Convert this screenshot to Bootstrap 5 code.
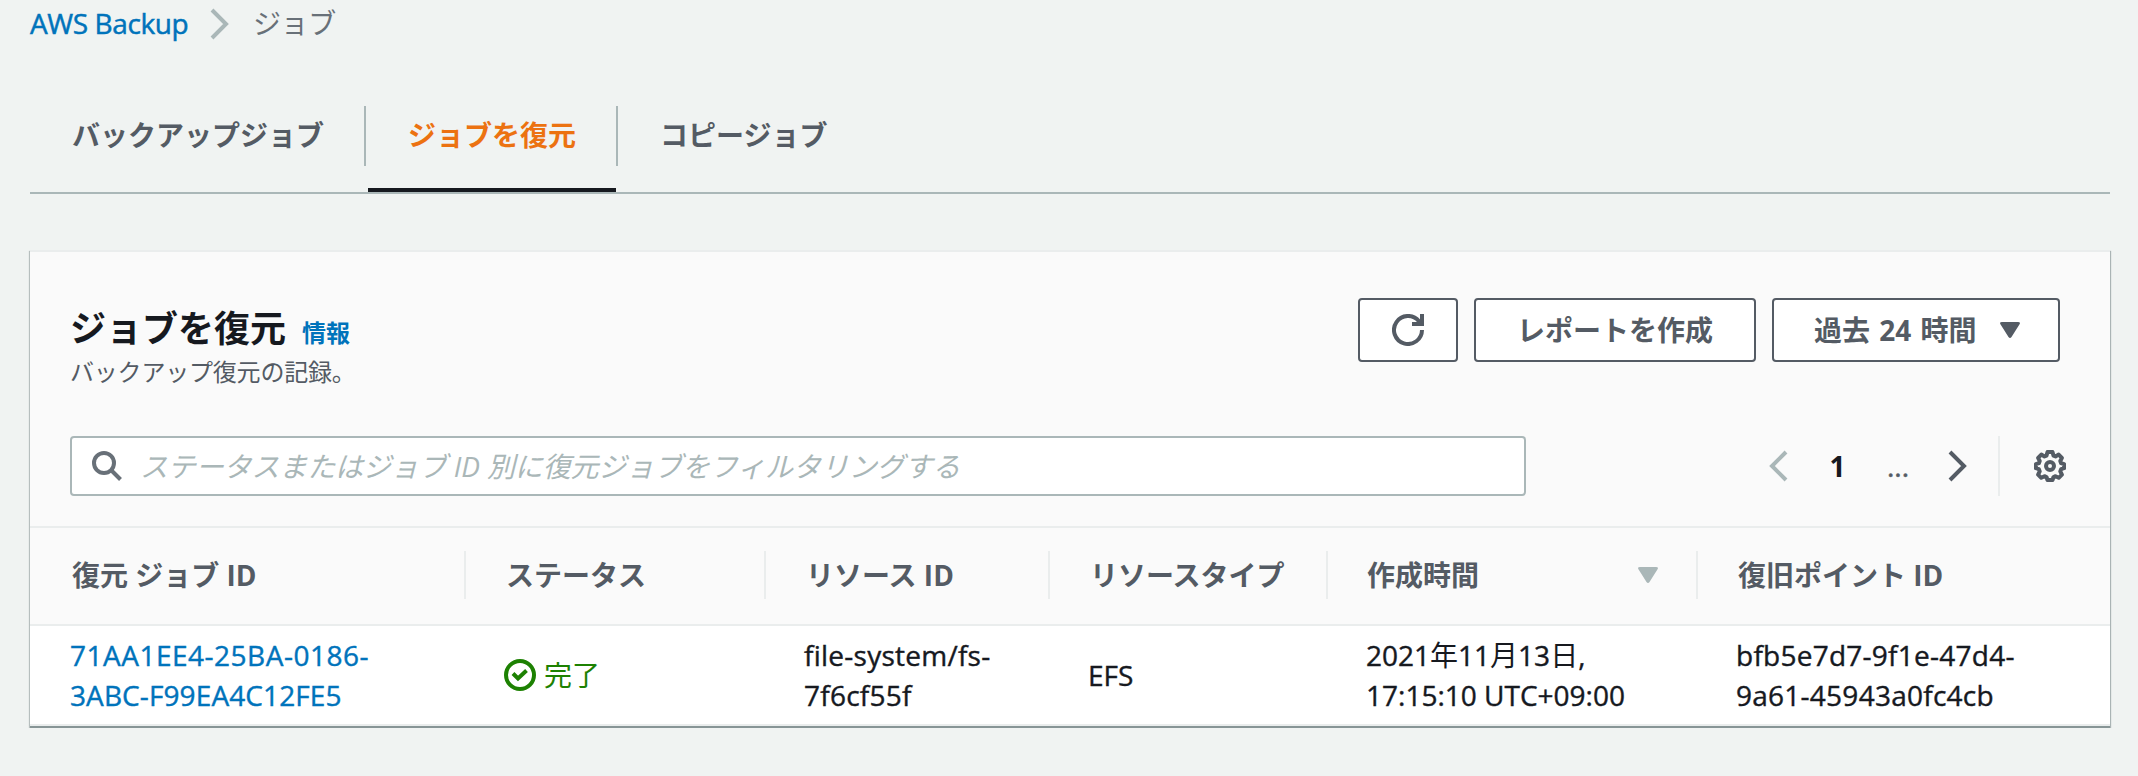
<!DOCTYPE html>
<html lang="ja">
<head>
<meta charset="utf-8">
<title>AWS Backup</title>
<link rel="stylesheet" href="https://cdn.jsdelivr.net/npm/bootstrap@5.3.0/dist/css/bootstrap.min.css">
<style>
body{background:#f0f3f2;color:#16191f;font-family:"Open Sans","Noto Sans CJK JP",sans-serif;font-size:28px;line-height:40px;overflow:hidden}
a{color:#0073bb;text-decoration:none}
svg{display:block;flex:none}
.page{padding:0 28px 0 30px}
.crumbs{height:48px;padding-top:3px}
.crumbs a{letter-spacing:-.4px;-webkit-text-stroke:.5px}
.crumbs .here{color:#687078;letter-spacing:-.4px}
.job-tabs{height:146px;padding-top:58px;border-bottom:2px solid #aab7b8}
.job-tabs .nav-link{height:86px;padding:9px 40px 0 42px;color:#545b64;font-weight:700;border-radius:0}
.job-tabs .nav-link.active{color:#ec7211;border-bottom:4px solid #16191f}
.job-tabs .divider{width:2px;height:60px;background:#aab7b8}
.panel{margin-top:56px;border:0;border-top:2px solid #eaeded;border-bottom:2px solid #879596;border-radius:0;background:#fafafa;box-shadow:0 1px 1px 0 rgba(0,28,36,.3),1px 1px 1px 0 rgba(0,28,36,.25),-1px 1px 1px 0 rgba(0,28,36,.2);color:inherit}
.panel-top{height:184px;padding:46px 50px 0 40px}
.title{font-size:36px;line-height:46px;font-weight:700}
.info{font-size:24px;font-weight:700}
.desc{font-size:24px;line-height:36px;color:#545b64;letter-spacing:-.2px;padding-top:1px}
.act{height:64px;border:2px solid #545b64;border-radius:4px;background:#fff;color:#545b64;font-size:28px;font-weight:700;line-height:40px;padding:0}
.search{width:1456px;height:60px;border:2px solid #aab7b8;border-radius:4px;background:#fff;padding-left:20px}
.search input{border:0;outline:0;background:none;padding:0 0 0 18px;height:56px;font-size:28px;letter-spacing:-.13px}
.search input::placeholder{color:#aab7b8;font-style:italic;opacity:1}
.pager{margin-left:242px;color:#545b64}
.jobs{table-layout:fixed;border-collapse:separate;border-spacing:0;width:100%;border-top:2px solid #eaeded;color:#16191f}
.jobs th{height:98px;border-bottom:2px solid #eaeded;color:#545b64;padding:0 0 2px;font-weight:700}
.jobs th>div{height:48px;border-right:2px solid #eaeded;padding-left:40px}
.jobs th:last-child>div{border:0}
.jobs th:first-child>div{padding-left:42px}
.jobs td{height:100px;border-bottom:2px solid #eaeded;background:#fff;padding:0 0 0 38px;vertical-align:middle;-webkit-text-stroke:.4px}
.jobs td:first-child{padding-left:40px}
.jobs .kanji{-webkit-text-stroke:0}
.wide{letter-spacing:.5px}
.loose{letter-spacing:.25px}
.ok{color:#1d8102}
</style>
</head>
<body>
<div class="page">
  <nav class="crumbs d-flex align-items-start">
    <a href="#" style="width:180px">AWS Backup</a>
    <svg width="20" height="32" style="margin:5px 23px 0 0" viewBox="0 0 20 32" fill="none" stroke="#aab7b8" stroke-width="4"><path d="M2 2l14 14L2 30"/></svg>
    <span class="here">ジョブ</span>
  </nav>
  <nav class="job-tabs nav flex-nowrap align-items-start">
    <a class="nav-link" href="#" style="width:334px">バックアップジョブ</a>
    <span class="divider"></span>
    <a class="nav-link active" href="#" style="width:248px;margin-left:2px;padding-left:40px;padding-right:0">ジョブを復元</a>
    <span class="divider"></span>
    <a class="nav-link" href="#">コピージョブ</a>
  </nav>
  <section class="panel card">
    <div class="panel-top d-flex justify-content-between">
      <div style="padding-top:8px">
        <div class="d-flex align-items-baseline"><span class="title">ジョブを復元</span><a class="info ms-3" href="#">情報</a></div>
        <div class="desc">バックアップ復元の記録。</div>
      </div>
      <div class="d-flex gap-3">
        <button class="act btn d-flex align-items-center justify-content-center" style="width:100px">
          <svg width="32" height="32" viewBox="0 0 32 32" fill="none" stroke="#545b64" stroke-width="4"><path d="M30 16A14 14 0 1 1 27 7.300L28.500 10M30 0V10H20"/></svg>
        </button>
        <button class="act btn" style="width:282px">レポートを作成</button>
        <button class="act btn d-flex align-items-center" style="width:288px;padding-left:40px;word-spacing:2px">過去 24 時間
          <svg style="margin-left:23px" width="20" height="16" viewBox="0 0 20 16"><path d="M2 0H18Q21 0 19.4 2.5L11.5 15Q10 17 8.500 15L.6 2.500Q-1 0 2 0Z" fill="#545b64"/></svg>
        </button>
      </div>
    </div>
    <div class="d-flex" style="height:90px;padding-left:40px">
      <div class="search d-flex align-items-center">
        <svg width="30" height="30" viewBox="0 0 30 30" fill="none" stroke="#687078" stroke-width="4"><circle cx="12" cy="12" r="10"/><path d="M19 19l9.500 9.500"/></svg>
        <input class="flex-grow-1" placeholder="ステータスまたはジョブ ID 別に復元ジョブをフィルタリングする">
      </div>
      <div class="pager d-flex align-items-center" style="height:60px">
        <svg width="20" height="32" viewBox="0 0 20 32" fill="none" stroke="#aab7b8" stroke-width="4"><path d="M18 2L4 16l14 14"/></svg>
        <b class="text-center" style="width:99px;color:#16191f">1</b>
        <span style="width:61px;-webkit-text-stroke:.5px">...</span>
        <svg width="20" height="32" viewBox="0 0 20 32" fill="none" stroke="#545b64" stroke-width="4"><path d="M2 2l14 14L2 30"/></svg>
        <span style="width:2px;height:60px;background:#eaeded;margin:0 34px 0 30px"></span>
        <svg width="32" height="32" viewBox="0 0 32 32" fill="none" stroke="#545b64" stroke-width="4" stroke-linejoin="round"><path d="M13.500 2h5l1 3.600 2 .8 3.200-1.800 3.200 3.200-1.600 3.200.8 2.200 3 1v4l-3 1-.8 2.200 1.600 3.200-3.200 3.200-3.200-1.600-2 .8-1 3h-5l-1-3-2-.8-3.200 1.600-3.200-3.200 1.600-3.200-.8-2.200-3-1v-4l3-1 .8-2.200-1.600-3.200 3.200-3.200 3.200 1.800 2-.8z"/><circle cx="16" cy="16" r="4"/></svg>
      </div>
    </div>
    <table class="jobs">
      <colgroup><col style="width:436px"><col style="width:300px"><col style="width:284px"><col style="width:278px"><col style="width:370px"><col></colgroup>
      <thead><tr>
        <th><div class="d-flex align-items-center">復元 ジョブ ID</div></th>
        <th><div class="d-flex align-items-center">ステータス</div></th>
        <th><div class="d-flex align-items-center">リソース ID</div></th>
        <th><div class="d-flex align-items-center">リソースタイプ</div></th>
        <th><div class="d-flex align-items-center justify-content-between" style="padding:0 38px 0 39px">作成時間
          <svg width="20" height="16" viewBox="0 0 20 16"><path d="M2 0H18Q21 0 19.4 2.5L11.500 15Q10 17 8.500 15L.6 2.500Q-1 0 2 0Z" fill="#aab7b8"/></svg></div></th>
        <th><div class="d-flex align-items-center">復旧ポイント ID</div></th>
      </tr></thead>
      <tbody><tr>
        <td><a href="#" class="d-block"><span class="wide">71AA1EE4-25BA-0186-</span><br><span style="letter-spacing:.1px">3ABC-F99EA4C12FE5</span></a></td>
        <td class="kanji"><div class="ok d-flex align-items-center"><svg width="32" height="32" viewBox="0 0 32 32" fill="none" stroke="#1d8102" stroke-width="4"><circle cx="16" cy="16" r="14"/><path d="M9 14.500l5 5 8.500-8"/></svg><span style="margin-left:8px">完了</span></div></td>
        <td class="loose">file-system/fs-<br>7f6cf55f</td>
        <td>EFS</td>
        <td>2021<span class="kanji">年</span>11<span class="kanji">月</span>13<span class="kanji">日</span>,<br>17:15:10 UTC+09:00</td>
        <td class="loose">bfb5e7d7-9f1e-47d4-<br>9a61-45943a0fc4cb</td>
      </tr></tbody>
    </table>
  </section>
</div>
<script src="https://cdn.jsdelivr.net/npm/bootstrap@5.3.0/dist/js/bootstrap.bundle.min.js"></script>
</body>
</html>
